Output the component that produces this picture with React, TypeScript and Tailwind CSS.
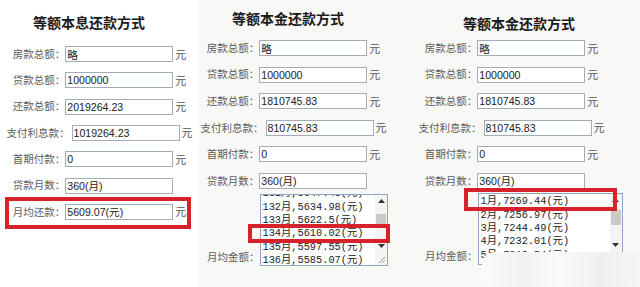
const cjk = { fontFamily: '"Noto Sans CJK SC", "Liberation Sans", sans-serif' };

type Row = { label: string; value: string; unit?: boolean };

const leftRows: Row[] = [
  { label: '房款总额：', value: '略', unit: true },
  { label: '贷款总额：', value: '1000000', unit: true },
  { label: '还款总额：', value: '2019264.23', unit: true },
  { label: '支付利息款：', value: '1019264.23', unit: true },
  { label: '首期付款：', value: '0', unit: true },
  { label: '贷款月数：', value: '360(月)', unit: false },
  { label: '月均还款：', value: '5609.07(元)', unit: true },
];

const rightRows: Row[] = [
  { label: '房款总额：', value: '略', unit: true },
  { label: '贷款总额：', value: '1000000', unit: true },
  { label: '还款总额：', value: '1810745.83', unit: true },
  { label: '支付利息款：', value: '810745.83', unit: true },
  { label: '首期付款：', value: '0', unit: true },
  { label: '贷款月数：', value: '360(月)', unit: false },
];

const midItems = ['131月,5647.45(元)', '132月,5634.98(元)', '133月,5622.5(元)', '134月,5610.02(元)', '135月,5597.55(元)', '136月,5585.07(元)'];
const rightItems = ['1月,7269.44(元)', '2月,7256.97(元)', '3月,7244.49(元)', '4月,7232.01(元)', '5月,7219.54(元)', '6月,7207.06(元)'];

function FieldRow({ row }: { row: Row }) {
  return (
    <div className="flex h-[16px] items-center justify-center">
      <span className="text-[10.5px] leading-none text-[#5c5c5c] whitespace-nowrap" style={cjk}>
        {row.label}
      </span>
      <input
        readOnly
        value={row.value}
        className={`h-[16px] w-[108px] border border-[#a3adb8] bg-white pl-[1px] text-[10.6px] leading-[14px] text-[#222] outline-none ${row.label.length > 5 ? 'ml-[2px]' : ''}`}
        style={{ fontFamily: '"Liberation Sans", "Noto Sans CJK SC", sans-serif' }}
      />
      <span className={`ml-[2px] text-[11px] leading-none text-[#555] ${row.unit ? '' : 'invisible'}`} style={cjk}>
        元
      </span>
    </div>
  );
}

function Arrow({ up }: { up?: boolean }) {
  return (
    <div className="flex h-[13px] items-center justify-center">
      <svg width="7" height="4" viewBox="0 0 7 4">
        <polygon points={up ? '0,4 7,4 3.5,0' : '0,0 7,0 3.5,4'} fill="#333" />
      </svg>
    </div>
  );
}

function ListBox({ items, shift, thumb }: { items: string[]; shift: string; thumb: string }) {
  return (
    <div className="flex h-[72px] w-[145px] border border-[#8ea6c4] bg-white">
      <div className="flex-1 overflow-hidden pl-[2px]">
        <div className={shift}>
          {items.map((t) => (
            <div
              key={t}
              className="h-[13.3px] whitespace-nowrap text-[10.3px] leading-[13.3px] text-[#1c1c28]"
              style={{ fontFamily: '"Liberation Mono", "Noto Sans CJK SC", monospace' }}
            >
              {t}
            </div>
          ))}
        </div>
      </div>
      <div className="flex w-[12px] flex-col bg-[#f4f4f4]">
        <Arrow up />
        <div className="relative flex-1">
          <div className={`absolute left-[1px] right-[1px] bg-[#c9c9c9] ${thumb}`} />
        </div>
        <Arrow />
        <div className="flex h-[12px] items-end justify-end pb-[1px] pr-[1px]">
          <svg width="8" height="8" viewBox="0 0 8 8">
            <path d="M7 1L1 7M7 4L4 7" stroke="#9a9a9a" strokeWidth="1" />
          </svg>
        </div>
      </div>
    </div>
  );
}

function Title({ text }: { text: string }) {
  return (
    <div className="text-[14px] font-bold leading-[14px] text-[#1b1b1b] whitespace-nowrap" style={cjk}>
      {text}
    </div>
  );
}

export default function App() {
  return (
    <div className="relative flex h-[287px] w-[640px] overflow-hidden bg-[#f8f8f6]">
      <div className="flex w-[199px] shrink-0 flex-col bg-white">
        <div className="h-[46px] pl-[33px] pt-[15px]">
          <Title text="等额本息还款方式" />
        </div>
        <div className="flex flex-col gap-[10.33px]">
          {leftRows.map((r) => (
            <FieldRow key={r.label} row={r} />
          ))}
        </div>
      </div>

      <div className="flex w-[189px] shrink-0 flex-col">
        <div className="h-[40px] pl-[33px] pt-[11px]">
          <Title text="等额本金还款方式" />
        </div>
        <div className="flex flex-col gap-[10.6px]">
          {rightRows.map((r) => (
            <FieldRow key={r.label} row={r} />
          ))}
          <div className="-mt-[5.6px] flex items-end pl-[8px]">
            <span className="mb-[2px] text-[10.5px] leading-[14px] text-[#5c5c5c] whitespace-nowrap" style={cjk}>
              月均金额：
            </span>
            <ListBox items={midItems} shift="-mt-[7.5px]" thumb="top-[6px] h-[13px]" />
          </div>
        </div>
      </div>

      <div className="flex w-[247px] shrink-0 flex-col">
        <div className="h-[40px] pl-[75px] pt-[16px]">
          <Title text="等额本金还款方式" />
        </div>
        <div className="flex flex-col gap-[10.6px]">
          {rightRows.map((r) => (
            <FieldRow key={r.label} row={r} />
          ))}
          <div className="-mt-[6.6px] flex items-end pl-[37px]">
            <span className="mb-[2px] text-[10.5px] leading-[14px] text-[#5c5c5c] whitespace-nowrap" style={cjk}>
              月均金额：
            </span>
            <ListBox items={rightItems} shift="mt-[1.5px]" thumb="top-[3px] h-[15px]" />
          </div>
        </div>
      </div>

      {/* red annotation boxes */}
      <div className="absolute left-[5px] top-[197px] h-[32px] w-[186px] border-[4px] border-[#d8222b]" />
      <div className="absolute left-[248px] top-[224px] h-[19px] w-[142px] border-[4px] border-[#d8222b]" />
      <div className="absolute left-[464px] top-[188px] h-[23px] w-[153px] border-[4px] border-[#d8222b]" />

      {/* watermark blur */}
      <div className="absolute left-[482px] top-[252px] h-[40px] w-[170px] rounded-l-[12px] bg-[linear-gradient(90deg,#fbfbfb,#f1f1f1_25%,#fbfbfb_45%,#efefef_70%,#f8f8f8)]" />
    </div>
  );
}
